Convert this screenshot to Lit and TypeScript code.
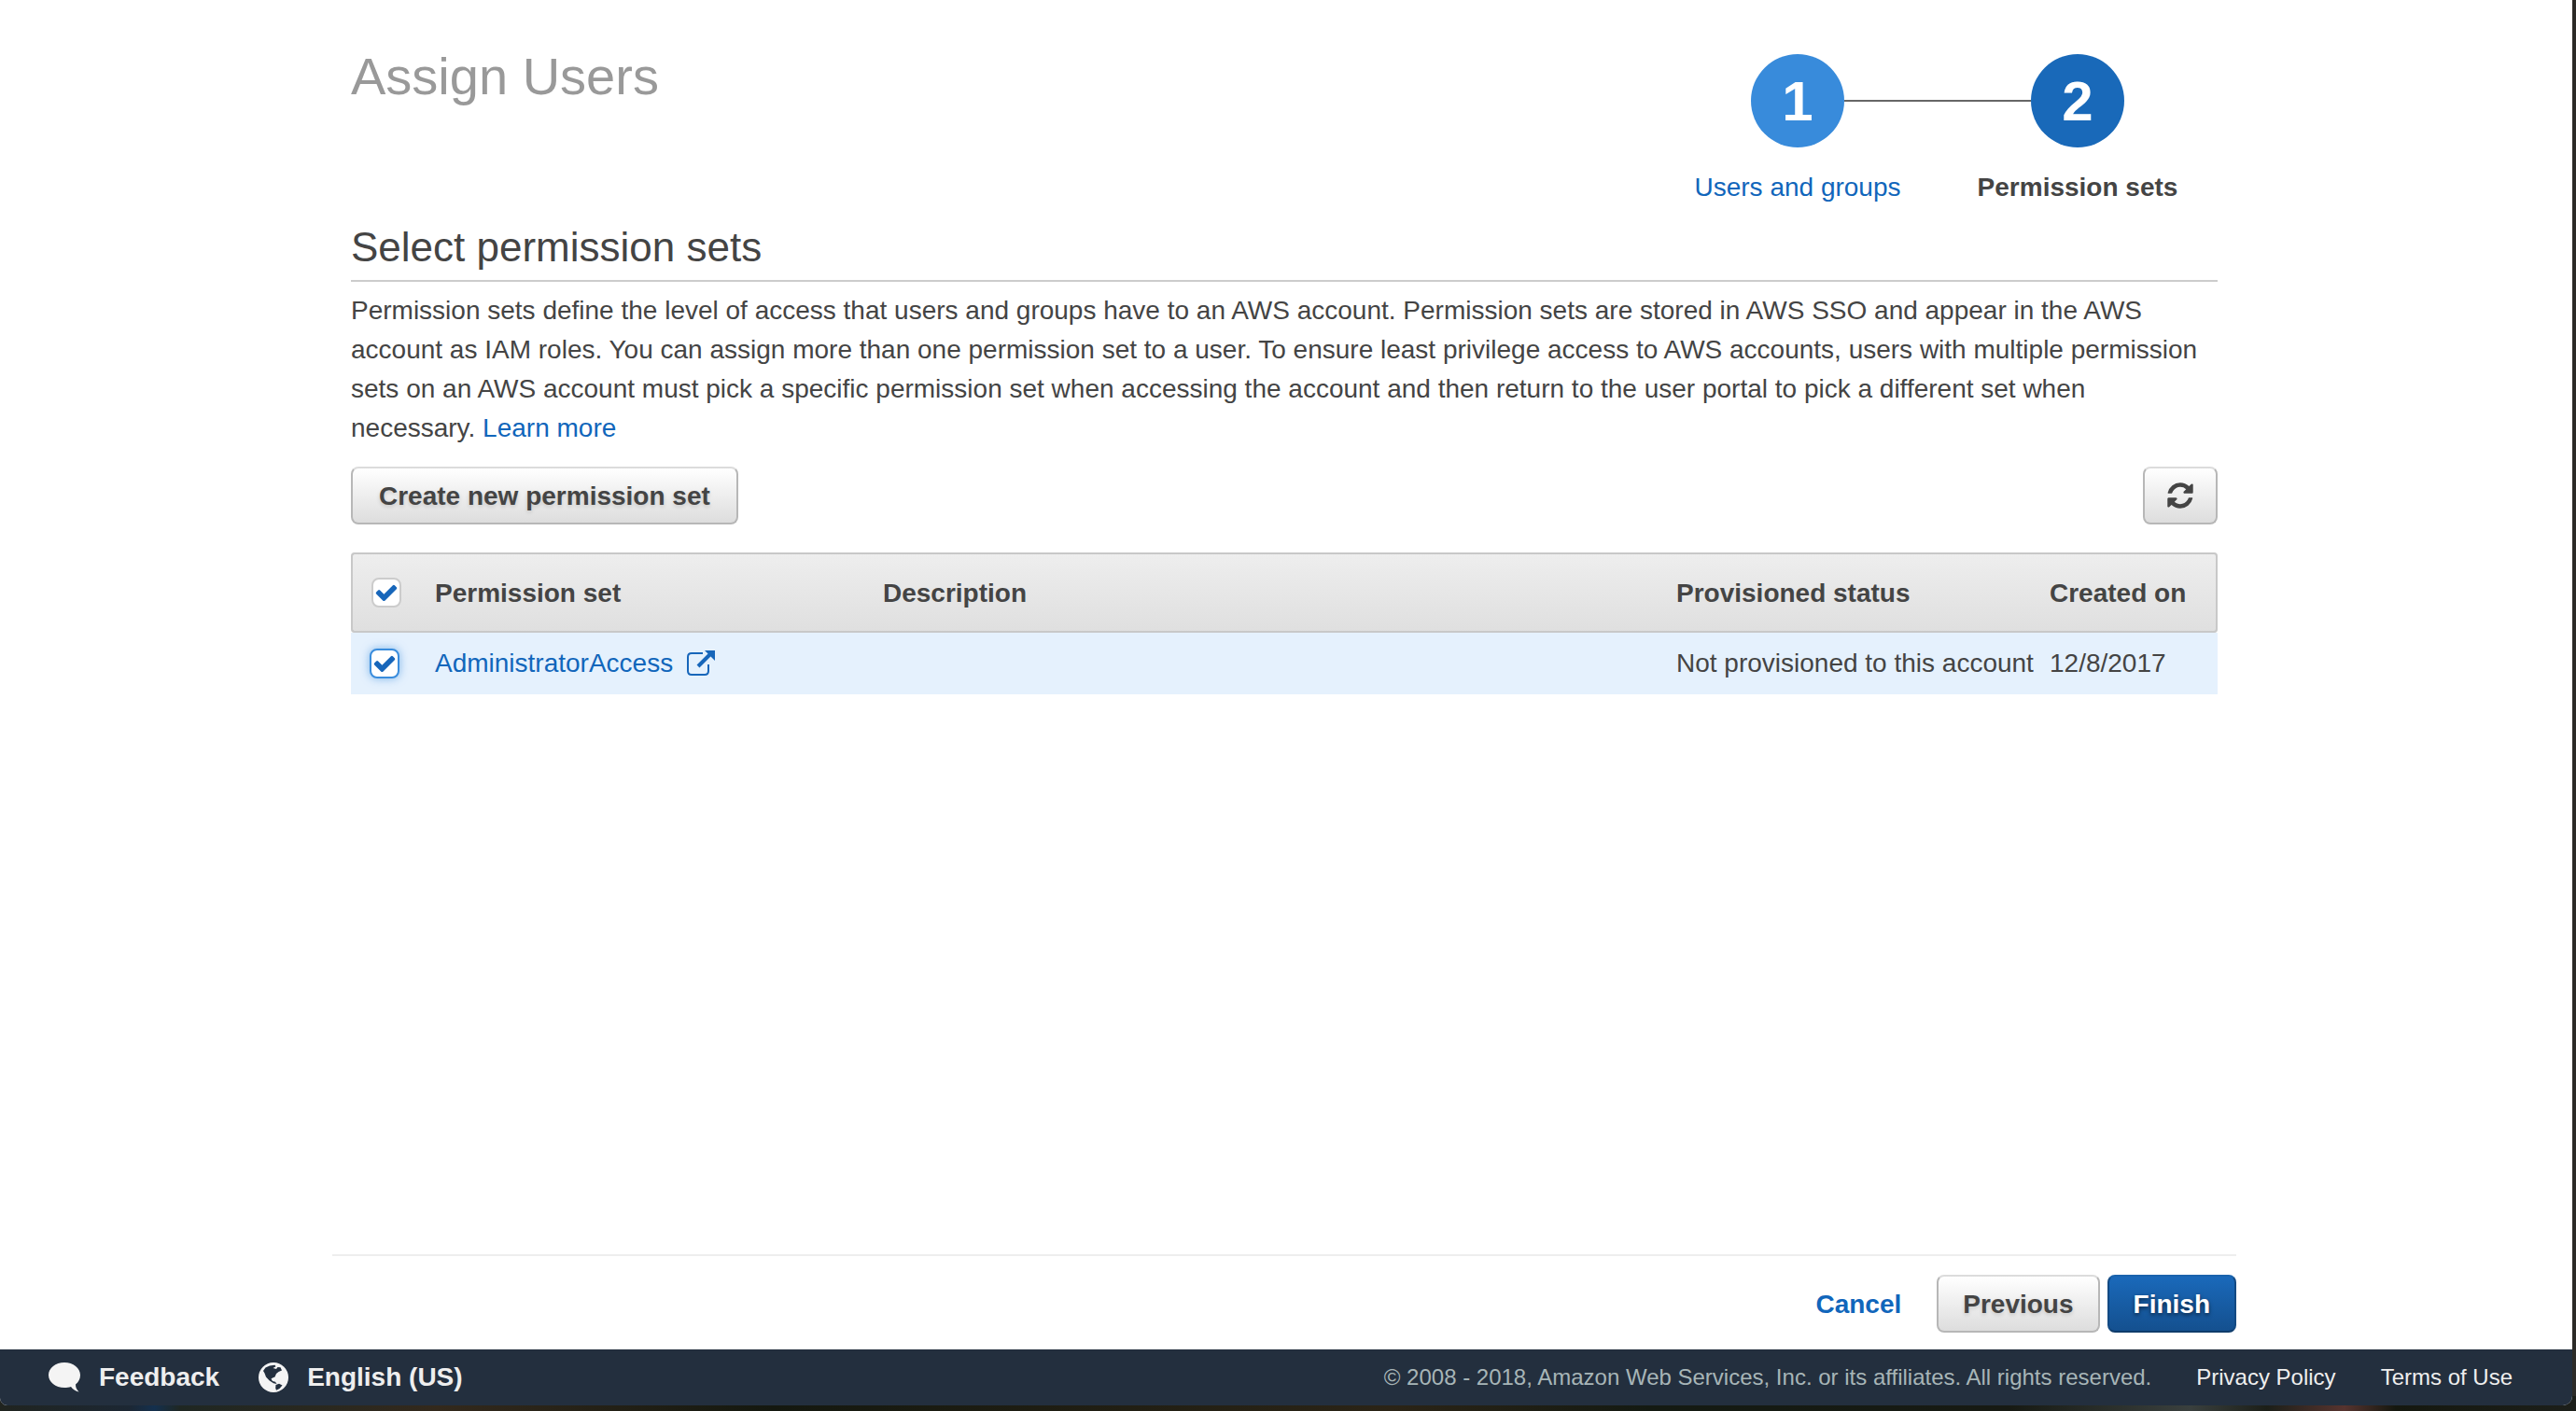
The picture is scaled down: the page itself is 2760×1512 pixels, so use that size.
import { LitElement, html, svg, css, nothing } from "lit";
import { customElement, property, state } from "lit/decorators.js";

interface PermissionSet {
  name: string;
  description: string;
  status: string;
  created: string;
}

const PERMISSION_SETS: PermissionSet[] = [
  {
    name: "AdministratorAccess",
    description: "",
    status: "Not provisioned to this account",
    created: "12/8/2017",
  },
];

const checkShape = svg`<path fill="#1766ba" d="M1671 566q0 40-28 68l-724 724-136 136q-28 28-68 28t-68-28l-136-136-362-362q-28-28-28-68t28-68l136-136q28-28 68-28t68 28l294 295 656-657q28-28 68-28t68 28l136 136q28 28 28 68z"/>`;

const refreshShape = svg`<path fill="#444" d="M1639 1056q0 5-1 7-64 268-268 434.5t-478 166.5q-146 0-282.500-55t-243.500-157l-129 129q-19 19-45 19t-45-19-19-45v-448q0-26 19-45t45-19h448q26 0 45 19t19 45-19 45l-137 137q71 66 161 102t187 36q134 0 250-65t186-179q11-17 53-117 8-23 30-23h192q13 0 22.500 9.500t9.500 22.500zm25-800v448q0 26-19 45t-45 19h-448q-26 0-45-19t-19-45 19-45l138-138q-148-137-349-137-134 0-250 65t-186 179q-11 17-53 117-8 23-30 23h-199q-13 0-22.500-9.500t-9.500-22.500v-7q65-268 270-434.500t480-166.500q146 0 284 55.500t245 156.500l130-129q19-19 45-19t45 19 19 45z"/>`;

/** A tick box with its own frame and check mark. */
@customElement("check-box")
class CheckBox extends LitElement {
  static styles = css`
    :host {
      display: block;
      width: 32px;
      height: 32px;
    }
    .box {
      display: grid;
      width: 32px;
      height: 32px;
    }
    .input,
    .mark {
      grid-area: 1 / 1;
    }
    .input {
      appearance: none;
      box-sizing: border-box;
      width: 32px;
      height: 32px;
      margin: 0;
      border: 2px solid #ccc;
      border-radius: 8px;
      background: #fff;
    }
    .input.active {
      border-color: #3a8ddd;
      box-shadow: 0 0 10px rgba(58, 141, 221, 0.6);
      outline: none;
    }
    .mark {
      width: 26px;
      height: 26px;
      place-self: center;
      pointer-events: none;
    }
  `;

  @property() label = "";
  @property({ type: Boolean }) checked = false;
  @property({ type: Boolean }) active = false;

  private toggle(e: Event) {
    this.checked = (e.target as HTMLInputElement).checked;
    this.dispatchEvent(new CustomEvent("toggled", { detail: this.checked }));
  }

  render() {
    return html`<label class="box">
      <input
        class="input ${this.active ? "active" : ""}"
        type="checkbox"
        aria-label=${this.label}
        .checked=${this.checked}
        @change=${this.toggle}
      />
      ${this.checked
        ? html`<svg class="mark" viewBox="0 0 1792 1792" aria-hidden="true">${checkShape}</svg>`
        : nothing}
    </label>`;
  }
}

/** The numbered steps of the wizard. */
@customElement("wizard-steps")
class WizardSteps extends LitElement {
  static styles = css`
    :host {
      display: block;
    }
    .steps {
      display: grid;
      grid-template-columns: 300px 300px;
      margin: 0;
      padding: 0;
      list-style: none;
    }
    .step {
      display: grid;
      grid-template-columns: 1fr 100px 1fr;
      row-gap: 22px;
      align-items: center;
      justify-items: center;
    }
    .line {
      justify-self: stretch;
      height: 2px;
    }
    .line.drawn {
      background: #666;
    }
    .badge {
      box-sizing: border-box;
      width: 100px;
      height: 100px;
      border-radius: 50%;
      background: #388bdb;
      color: #fff;
      font-size: 60px;
      font-weight: bold;
      line-height: 102px;
      text-align: center;
    }
    .badge.current {
      background: #1969b9;
    }
    .name {
      grid-column: 1 / -1;
      font-size: 28px;
      line-height: 42px;
      color: #444;
      font-weight: bold;
    }
    a.name {
      color: #1166bb;
      font-weight: normal;
      text-decoration: none;
    }
  `;

  render() {
    return html`<ol class="steps">
      <li class="step">
        <span class="line"></span>
        <span class="badge">1</span>
        <span class="line drawn"></span>
        <a class="name" href="#users">Users and groups</a>
      </li>
      <li class="step" aria-current="step">
        <span class="line drawn"></span>
        <span class="badge current">2</span>
        <span class="line"></span>
        <span class="name">Permission sets</span>
      </li>
    </ol>`;
  }
}

/** The console's bottom bar. */
@customElement("console-footer")
class ConsoleFooter extends LitElement {
  static styles = css`
    :host {
      display: block;
    }
    .bar {
      display: flex;
      align-items: center;
      height: 60px;
      padding: 0 64px 0 52px;
      background: #232f3e;
      border-radius: 0 0 10px 8px;
      font-size: 24px;
      color: #a7b5b7;
    }
    .tool {
      display: flex;
      align-items: center;
      gap: 20px;
      margin-right: 40px;
      padding: 0;
      border: 0;
      background: none;
      color: #eee;
      font: bold 28px/42px "Liberation Sans", Arial, sans-serif;
    }
    .icon {
      width: 34px;
      height: 34px;
    }
    .legal {
      margin-left: auto;
    }
    .link {
      margin-left: 48px;
      color: #eee;
      text-decoration: none;
    }
  `;

  render() {
    return html`<footer class="bar">
      <button class="tool" type="button">
        <svg class="icon" viewBox="0 0 34 34" aria-hidden="true">
          <path
            fill="#f4f4f4"
            d="M17 1C7.500 1 0 7 0 14.500S7.500 28 17 28c2.500 0 5-.4 7-1 2 2.600 5 5 8.500 5.500-2.500-2.500-3.500-5-3.500-8 3.200-2.600 5-6 5-10C34 7 26.500 1 17 1z"
          />
        </svg>
        Feedback
      </button>
      <button class="tool" type="button">
        <svg class="icon" viewBox="0 0 34 34" aria-hidden="true">
          <circle cx="18" cy="17" r="16" fill="#f4f4f4" />
          <path
            fill="#232f3e"
            d="M7 10l2.500-3.500L14 4.500l5.500-.8 1 1.500-3 1.800 3.500.9 1.500-2 3 .3 1.500 3.300-3.500 1.500-2.500 2-1.500 3.500-2.500 1-1.500 1 1.500 2.500 3 .7 1.500 2.200-3.500-.6-4.500-3L10 16.500 8.500 12.500z"
          />
          <path fill="#232f3e" d="M20.500 25l3.500-1.200 3.500 1.700-3 3.500-3.500 1.800-.8-2.300z" />
        </svg>
        English (US)
      </button>
      <span class="legal">© 2008 - 2018, Amazon Web Services, Inc. or its affiliates. All rights reserved.</span>
      <a class="link" href="#privacy">Privacy Policy</a>
      <a class="link" href="#terms">Terms of Use</a>
    </footer>`;
  }
}

@customElement("app-root")
class AppRoot extends LitElement {
  static styles = css`
    :host {
      display: block;
      font-family: "Liberation Sans", Arial, sans-serif;
      font-size: 28px;
      line-height: 42px;
      color: #444;
    }
    .desktop {
      box-sizing: border-box;
      min-height: 100vh;
      display: flex;
      padding: 0 4px 6px 0;
      background:
        linear-gradient(90deg, #20241f, #1c2733 5%, #14304e 6%, #1f2722 7%, #33291c 17%, #14180f 30%, #2b2416 54%, #141a12 64%, #171a13 78%, #3a403e 85%, #1c1f18 88%, #57342f 91%, #15180f 93%, #1c1f1a) bottom / 100% 16px no-repeat,
        #2c2b28;
    }
    .window {
      flex: 1;
      display: flex;
      flex-direction: column;
      background: #fff;
      border-radius: 0 0 10px 8px;
    }
    .page {
      flex: 1;
      display: flex;
      flex-direction: column;
      padding-right: 4px;
    }
    .main,
    .actions {
      box-sizing: border-box;
      width: 100%;
      max-width: 2040px;
      margin: 0 auto;
    }
    .main {
      flex: 1;
      padding: 0 20px;
    }
    .head {
      display: flex;
      justify-content: space-between;
      padding-bottom: 14px;
    }
    .title {
      margin: 0;
      padding-top: 50px;
      font-size: 56px;
      font-weight: normal;
      line-height: 64px;
      color: #999;
    }
    .progress {
      padding-top: 58px;
    }
    .subtitle {
      margin: 0 0 10px;
      padding-bottom: 6px;
      border-bottom: 2px solid #ccc;
      font-size: 44px;
      font-weight: normal;
      line-height: 58px;
    }
    .intro {
      margin: 0 0 20px;
      padding-right: 8px;
    }
    .link {
      color: #1166bb;
      text-decoration: none;
    }
    .toolbar {
      display: flex;
      justify-content: space-between;
      margin-bottom: 30px;
    }
    .button {
      display: inline-flex;
      align-items: center;
      justify-content: center;
      box-sizing: border-box;
      height: 62px;
      padding: 2px 28px 0;
      border: 2px solid #b7b7b7;
      border-top-color: #dcdcdc;
      border-radius: 8px;
      background: linear-gradient(#fff, #ddd);
      color: #444;
      font: bold 28px/42px "Liberation Sans", Arial, sans-serif;
      text-shadow: 0 2px 4px rgba(0, 0, 0, 0.15);
    }
    .button.icon-only {
      padding: 0 22px;
    }
    .actions .button {
      padding: 2px 26px 0;
    }
    .button.primary {
      border-color: #1a63ad #134a83 #0f3c6b;
      background: linear-gradient(#1a69ba, #14508f);
      color: #fff;
      text-shadow: 0 2px 4px rgba(0, 0, 0, 0.6);
    }
    .refresh {
      width: 32px;
      height: 32px;
    }
    .table {
      width: 100%;
      table-layout: fixed;
      border-collapse: separate;
      border-spacing: 0;
    }
    .col-check {
      width: 4.5%;
    }
    .col-name {
      width: 24%;
    }
    .col-status {
      width: 20%;
    }
    .col-created {
      width: 9%;
    }
    .table th,
    .table td {
      padding: 0;
      text-align: left;
      white-space: nowrap;
    }
    .table thead {
      background: linear-gradient(#eee, #dfdfdf);
    }
    .table th {
      box-sizing: border-box;
      height: 86px;
      padding-top: 2px;
      border: solid #c8c8c8;
      border-width: 2px 0;
    }
    .table th:first-child {
      padding-top: 0;
      border-left-width: 2px;
      border-radius: 4px 0 0 4px;
    }
    .table th:last-child {
      border-right-width: 2px;
      border-radius: 0 4px 4px 0;
    }
    .table th:first-child,
    .table td:first-child {
      padding-left: 20px;
    }
    .table td {
      height: 66px;
      background: #e5f1fd;
    }
    .name {
      display: flex;
      align-items: center;
      gap: 14px;
    }
    .external {
      width: 32px;
      height: 32px;
    }
    .actions {
      display: flex;
      align-items: center;
      justify-content: flex-end;
      gap: 8px;
      padding: 20px 0 18px;
      border-top: 2px solid #eee;
    }
    .cancel {
      margin-right: 30px;
      padding-top: 2px;
      font-weight: bold;
    }
  `;

  @state() private selected = new Set(PERMISSION_SETS.map((p) => p.name));

  private toggleAll(e: CustomEvent<boolean>) {
    this.selected = new Set(e.detail ? PERMISSION_SETS.map((p) => p.name) : []);
  }

  private toggleOne(name: string, e: CustomEvent<boolean>) {
    const next = new Set(this.selected);
    if (e.detail) next.add(name);
    else next.delete(name);
    this.selected = next;
  }

  private renderRow(p: PermissionSet) {
    return html`<tr>
      <td>
        <check-box
          label=${p.name}
          active
          .checked=${this.selected.has(p.name)}
          @toggled=${(e: CustomEvent<boolean>) => this.toggleOne(p.name, e)}
        ></check-box>
      </td>
      <td>
        <a class="link name" href="#set">
          ${p.name}
          <svg class="external" viewBox="0 0 32 32" fill="none" stroke="#1766ba" aria-hidden="true">
            <path stroke-width="2" d="M18 5H6Q2 5 2 9v15q0 4 4 4h14q4 0 4-4v-7" />
            <path stroke-width="4" d="M13 19L26 6" />
            <path fill="#1766ba" stroke="none" d="M20 2h11v11l-3.500-3.500-4-4z" />
          </svg>
        </a>
      </td>
      <td>${p.description}</td>
      <td>${p.status}</td>
      <td>${p.created}</td>
    </tr>`;
  }

  render() {
    return html`<div class="desktop">
      <div class="window">
        <div class="page">
          <main class="main">
            <header class="head">
              <h1 class="title">Assign Users</h1>
              <wizard-steps class="progress"></wizard-steps>
            </header>
            <h2 class="subtitle">Select permission sets</h2>
            <p class="intro">
              Permission sets define the level of access that users and groups have to an AWS account. Permission sets
              are stored in AWS SSO and appear in the AWS account as IAM roles. You can assign more than one permission
              set to a user. To ensure least privilege access to AWS accounts, users with multiple permission sets on an
              AWS account must pick a specific permission set when accessing the account and then return to the user
              portal to pick a different set when necessary. <a class="link" href="#learn">Learn more</a>
            </p>
            <div class="toolbar">
              <button class="button" type="button">Create new permission set</button>
              <button class="button icon-only" type="button" aria-label="Refresh">
                <svg class="refresh" viewBox="0 0 1792 1792" aria-hidden="true">${refreshShape}</svg>
              </button>
            </div>
            <table class="table">
              <colgroup>
                <col class="col-check" />
                <col class="col-name" />
                <col />
                <col class="col-status" />
                <col class="col-created" />
              </colgroup>
              <thead>
                <tr>
                  <th>
                    <check-box
                      label="Select all"
                      .checked=${this.selected.size === PERMISSION_SETS.length}
                      @toggled=${this.toggleAll}
                    ></check-box>
                  </th>
                  <th>Permission set</th>
                  <th>Description</th>
                  <th>Provisioned status</th>
                  <th>Created on</th>
                </tr>
              </thead>
              <tbody>
                ${PERMISSION_SETS.map((p) => this.renderRow(p))}
              </tbody>
            </table>
          </main>
          <div class="actions">
            <a class="link cancel" href="#cancel">Cancel</a>
            <button class="button" type="button">Previous</button>
            <button class="button primary" type="button">Finish</button>
          </div>
        </div>
        <console-footer></console-footer>
      </div>
    </div>`;
  }
}
